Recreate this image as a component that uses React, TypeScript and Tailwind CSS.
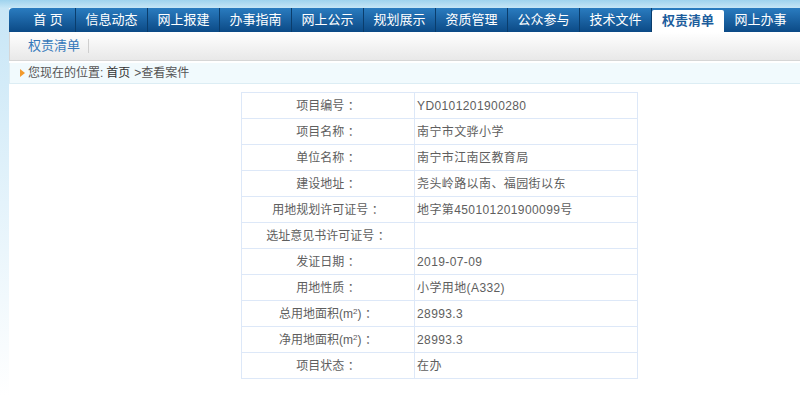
import React from 'react';

const navItems = ['首 页', '信息动态', '网上报建', '办事指南', '网上公示', '规划展示', '资质管理', '公众参与', '技术文件', '权责清单', '网上办事'];

const rows: [string, React.ReactNode][] = [
  ['项目编号 ：', 'YD0101201900280'],
  ['项目名称 ：', '南宁市文骅小学'],
  ['单位名称 ：', '南宁市江南区教育局'],
  ['建设地址 ：', '尧头岭路以南、福园街以东'],
  ['用地规划许可证号 ：', '地字第450101201900099号'],
  ['选址意见书许可证号 ：', ''],
  ['发证日期 ：', '2019-07-09'],
  ['用地性质 ：', '小学用地(A332)'],
  [<>总用地面积(m<sup className="text-[8px]">2</sup>) ：</>, '28993.3'],
  [<>净用地面积(m<sup className="text-[8px]">2</sup>) ：</>, '28993.3'],
  ['项目状态 ：', '在办'],
];

const font = { fontFamily: '"Liberation Sans", "Noto Sans CJK SC", sans-serif' };

export default function App() {
  return (
    <div className="w-[800px] h-[396px] overflow-hidden bg-white" style={font}>
      {/* banner bottom edge */}
      <div className="h-[8px] bg-gradient-to-b from-[#9fd3ee] to-[#c6e6f6]" />
      <div className="flex">
        <div className="w-[9px] h-[388px] bg-gradient-to-b from-[#c8e6f6] via-[#e4f3fb] to-white" />
        <div className="flex-1 flex flex-col">
          {/* main nav */}
          <div className="h-[24px] flex rounded-tl-[4px] bg-gradient-to-b from-[#2a7cc0] to-[#0b4a86] overflow-hidden">
            {navItems.map((item, i) => {
              const active = item === '权责清单';
              const w = i === 0 ? 'w-[67px] pl-[12px]' : i === navItems.length - 1 ? 'w-[73px]' : 'w-[72px]';
              if (active) {
                return (
                  <div key={item} className={`${w} mt-[2px] h-[22px] bg-white rounded-t-[2px] flex items-center justify-center text-[13px] font-bold text-[#1c5d9c]`}>
                    {item}
                  </div>
                );
              }
              return (
                <div
                  key={item}
                  className={`${w} h-full flex items-center justify-center text-[13px] text-white ${i < navItems.length - 2 ? 'border-r border-[#0a3d6c]' : ''}`}
                >
                  {item}
                </div>
              );
            })}
          </div>
          {/* sub nav */}
          <div className="h-[29px] flex items-center bg-gradient-to-b from-white to-[#e8e8e8] border-b border-l border-[#d6d6d6] pl-[18px]">
            <span className="text-[13px] text-[#3578ba]">权责清单</span>
            <span className="ml-[8px] w-px h-[14px] bg-[#cfcfcf]" />
          </div>
          {/* breadcrumb */}
          <div className="mt-[2px] h-[21px] flex items-center bg-[#f1fafd] border-b border-l border-[#dcedf4] pl-[10px] text-[12px] text-[#555]">
            <svg width="5" height="8" viewBox="0 0 5 8" className="mr-[3px]">
              <polygon points="0,0 5,4 0,8" fill="#f29a2c" />
            </svg>
            <span>您现在的位置: </span>
            <span className="ml-[3px] text-[#333]">首页</span>
            <span className="ml-[4px]">&gt;查看案件</span>
          </div>
          {/* detail table */}
          <table className="ml-[232px] mt-[8px] w-[397px] border-collapse text-[12px] text-[#5e5e5e]">
            <tbody>
              {rows.map(([k, v], i) => (
                <tr key={i} className="h-[26px]">
                  <td className="w-[173px] border border-[#dde8f8] text-center px-1">{k}</td>
                  <td className="border border-[#dde8f8] pl-[2px] tracking-[0.4px]">{v}</td>
                </tr>
              ))}
            </tbody>
          </table>
        </div>
      </div>
    </div>
  );
}
